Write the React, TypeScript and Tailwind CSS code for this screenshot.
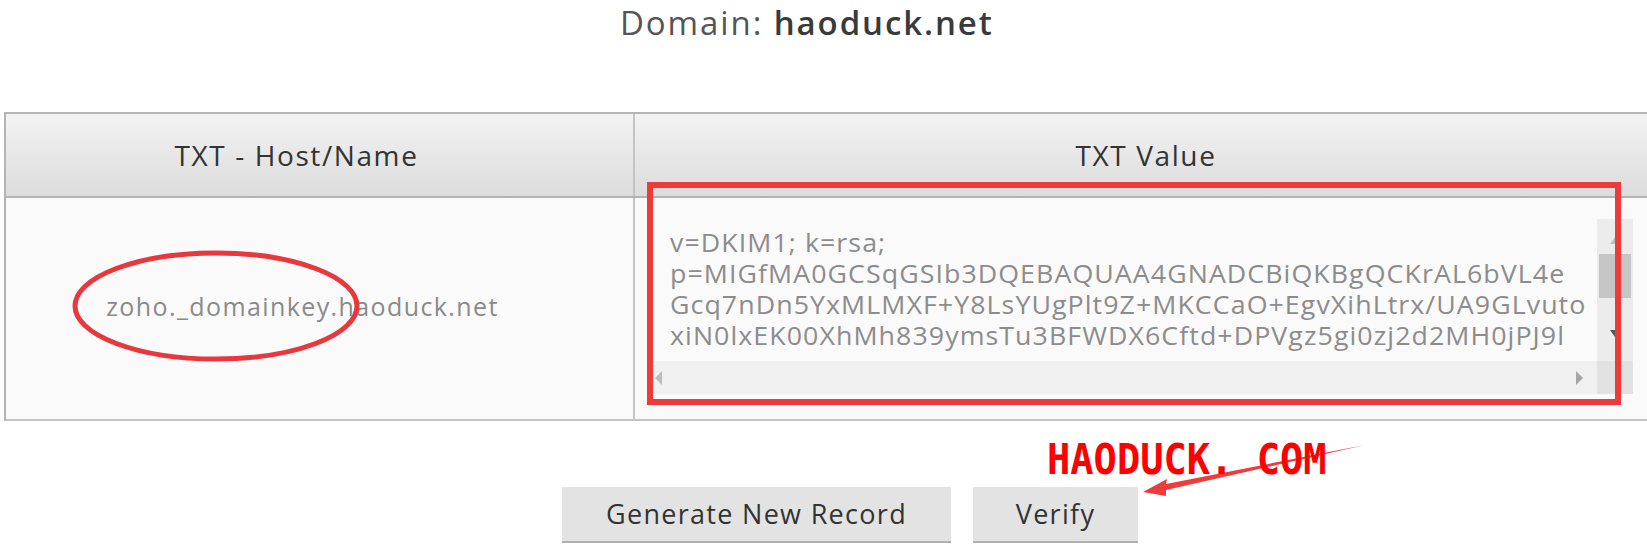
const txtLines = [
  "v=DKIM1; k=rsa;",
  "p=MIGfMA0GCSqGSIb3DQEBAQUAA4GNADCBiQKBgQCKrAL6bVL4e",
  "Gcq7nDn5YxMLMXF+Y8LsYUgPlt9Z+MKCCaO+EgvXihLtrx/UA9GLvuto",
  "xiN0lxEK00XhMh839ymsTu3BFWDX6Cftd+DPVgz5gi0zj2d2MH0jPJ9l",
]

export default function App() {
  return (
    <div className="relative h-[551px] w-[1647px] overflow-hidden bg-white font-['Open_Sans',sans-serif]">
      <DomainTitle />
      <RecordTable />
      <Actions />
      <Annotations />
    </div>
  )
}

function DomainTitle() {
  return (
    <div className="flex h-[112px] items-start pl-[620px] pt-[2px]">
      <h1 className="text-[33px] leading-[42px] tracking-[1.9px] text-[#555]">
        Domain: <span className="font-semibold text-[#3a3a3a]">haoduck.net</span>
      </h1>
    </div>
  )
}

function RecordTable() {
  return (
    <div className="ml-[4px] border-t-2 border-l-2 border-[#b4b4b4]">
      <div className="grid grid-cols-[629px_1fr] border-b-2 border-[#b4b4b4] bg-gradient-to-b from-[#f3f3f3] to-[#dcdcdc]">
        <div className="flex h-[82px] items-center justify-center border-r-2 border-[#c4c4c4] pr-[46px] text-[28px] tracking-[1.6px] text-[#333]">
          TXT - Host/Name
        </div>
        <div className="flex h-[82px] items-center justify-center pl-[10px] text-[28px] tracking-[1.6px] text-[#333]">
          TXT Value
        </div>
      </div>
      <div className="grid h-[223px] grid-cols-[629px_1fr] bg-[#fafafa]">
        <div className="flex items-center justify-center border-r-2 border-b-2 border-[#c4c4c4] pr-[34px] pb-[4px] text-[25px] tracking-[1.4px] text-[#8a8a8a]">
          zoho._domainkey.haoduck.net
        </div>
        <div className="min-h-0 border-b-2 border-[#c4c4c4] pt-[21px] pr-[14px] pb-[25px] pl-[18px]">
          <TxtValueBox />
        </div>
      </div>
    </div>
  )
}

function TxtValueBox() {
  return (
    <div className="grid h-full grid-cols-[minmax(0,1fr)_36px] grid-rows-[minmax(0,1fr)_33px] bg-[#fafafa]">
      <div className="min-h-0 overflow-hidden pt-[8px] pl-[17px]">
        <div className="origin-left scale-x-[1.07] text-[25px] leading-[31px] tracking-[1px] whitespace-nowrap text-[#8c8c8c]">
          {txtLines.map((line) => (
            <div key={line}>{line}</div>
          ))}
        </div>
      </div>
      <div className="flex min-h-0 flex-col items-center overflow-hidden bg-[#ececec] px-[2px]">
        <span className="mt-[18px] h-0 w-0 border-x-[5px] border-b-[7px] border-x-transparent border-b-[#bdbdbd]" />
        <div className="mt-[10px] h-[44px] w-full bg-[#c6c6c6]" />
        <span className="mt-[32px] h-0 w-0 border-x-[5px] border-t-[7px] border-x-transparent border-t-[#555]" />
      </div>
      <div className="flex items-center justify-between bg-[#f0f0f0] pr-[14px] pl-[2px]">
        <span className="h-0 w-0 border-y-[7px] border-r-[7px] border-y-transparent border-r-[#bdbdbd]" />
        <span className="h-0 w-0 border-y-[7px] border-l-[7px] border-y-transparent border-l-[#a5a5a5]" />
      </div>
      <div className="bg-[#e2e2e2]" />
    </div>
  )
}

function Actions() {
  return (
    <div className="mt-[66px] flex gap-[22px] pl-[562px]">
      <button className="h-[56px] w-[389px] border-b-2 border-[#b0b0b0] bg-[#e3e3e3] text-[27px] tracking-[1.3px] text-[#333]">
        Generate New Record
      </button>
      <button className="h-[56px] w-[165px] border-b-2 border-[#b0b0b0] bg-[#e3e3e3] text-[27px] tracking-[1.3px] text-[#333]">
        Verify
      </button>
    </div>
  )
}

function Annotations() {
  return (
    <>
      <svg className="pointer-events-none absolute top-0 left-0" width="1647" height="551">
        <ellipse cx="216" cy="306" rx="141" ry="53" fill="none" stroke="#e8383d" strokeWidth="5" />
        <rect x="650" y="185" width="968" height="217" fill="none" stroke="#ef3a3c" strokeWidth="6" />
        <polygon points="1365,445 1166,484 1167,479 1143,492 1166,496 1166,490" fill="#ee3b3b" />
      </svg>
      <div className="absolute top-[434px] left-[1047px] origin-left scale-x-[0.9] font-['DejaVu_Sans_Mono',monospace] text-[43px] leading-[50px] font-bold text-[#ff0000]">
        HAODUCK. COM
      </div>
    </>
  )
}
